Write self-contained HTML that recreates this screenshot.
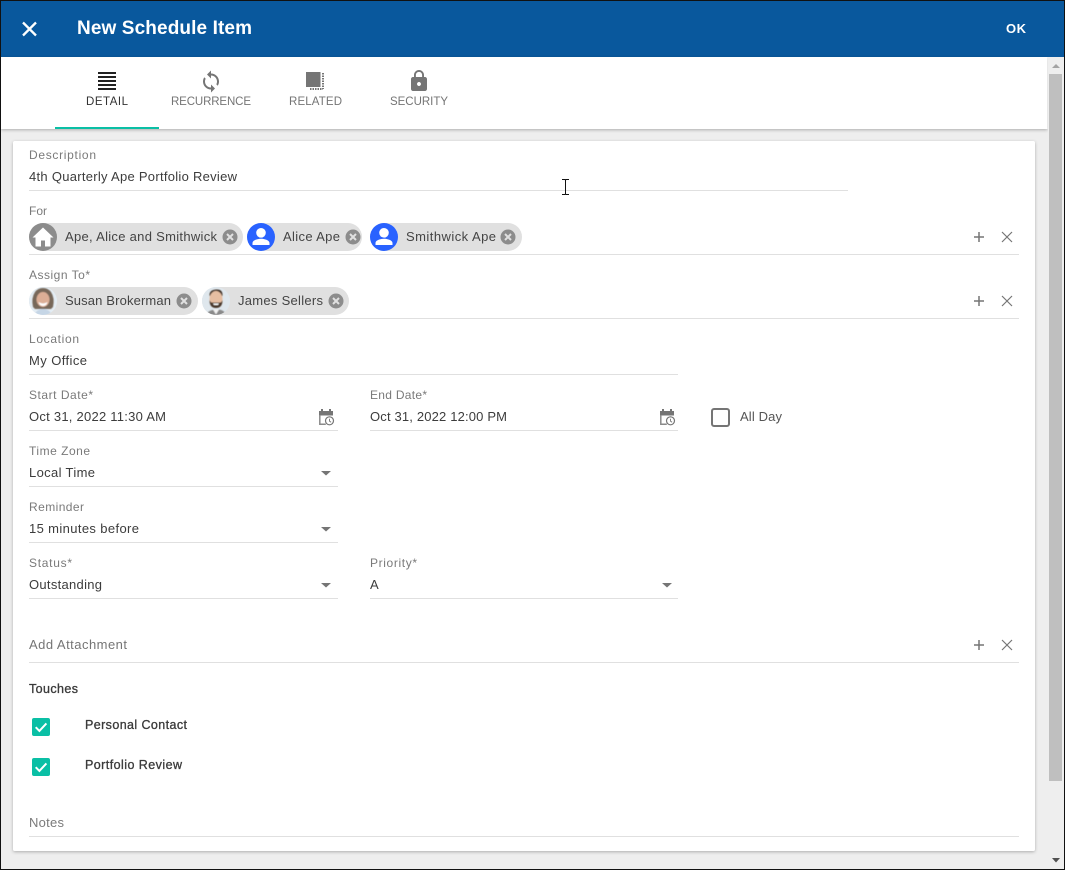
<!DOCTYPE html>
<html><head><meta charset="utf-8"><title>New Schedule Item</title>
<style>
html,body{margin:0;padding:0;width:1065px;height:870px;overflow:hidden;background:#eee}
svg{display:block;font-family:"Liberation Sans",sans-serif}
.l{font-size:12px;fill:#7a7a7a}
.v{font-size:13px;fill:#3c3c3c}
.c{font-size:13px;fill:#444}
.t{font-size:11.500px;fill:#757575}
.ln{stroke:#e0e0e0;stroke-width:1;shape-rendering:crispEdges}
</style></head><body>
<svg width="1065" height="870" viewBox="0 0 1065 870" xmlns="http://www.w3.org/2000/svg">
<defs>
<filter id="sh" x="-5%" y="-5%" width="110%" height="110%"><feDropShadow dx="0" dy="1" stdDeviation="1.500" flood-color="#000" flood-opacity=".28"/></filter>
<filter id="soft" x="-10%" y="-10%" width="120%" height="120%"><feGaussianBlur stdDeviation=".5"/></filter>
<g id="x"><circle r="7.500" fill="#8c8c8c"/><path d="M-3-3L3 3M3-3L-3 3" stroke="#e0e0e0" stroke-width="2"/></g>
<g id="pair"><path d="M979 -5v10M974 0h10" stroke="#757575" stroke-width="1.500"/><path d="M1002-5L1012 5M1012-5L1002 5" stroke="#757575" stroke-width="1.200"/></g>
<path id="caret" d="M-5 0H5L0 4.500Z" fill="#757575"/>
<g id="cal"><path d="M0 2h2V0h2v2h6V0h2v2h2v4.500h-14z" fill="#757575"/><path d="M.8 6v9.200h6" fill="none" stroke="#8a8a8a" stroke-width="1.500"/><circle cx="10.500" cy="11.800" r="4" fill="#fff" stroke="#757575" stroke-width="1.200"/><path d="M10.500 9.800v2.300l1.600 1.100" fill="none" stroke="#757575" stroke-width=".9"/></g>
<g id="person"><circle r="14" fill="#2962ff"/><circle cy="-4.200" r="4.800" fill="#fff"/><path d="M-8.500 8v-2c0-3 5.500-4.300 8.500-4.300S8.500 3 8.500 6v2z" fill="#fff"/></g>
<g id="chk"><rect width="18" height="18" rx="2" fill="#0abfa5"/><path d="M3.700 9.200l3.700 3.700 7-7.500" fill="none" stroke="#fff" stroke-width="2"/></g>
<clipPath id="a1"><circle cx="43" cy="301" r="14"/></clipPath>
<clipPath id="a2"><circle cx="216" cy="301" r="14"/></clipPath>
</defs>

<rect width="1065" height="870" fill="#eee"/>
<rect x="1" y="1" width="1063" height="56" fill="#09589d"/>
<path d="M23 22.500L36 35.500M36 22.500L23 35.500" stroke="#fff" stroke-width="2.300"/>
<text x="77" y="34" font-size="19" font-weight="700" fill="#fff" textLength="175">New Schedule Item</text>
<text x="1006" y="33" font-size="13" font-weight="700" fill="#fff" textLength="20">OK</text>

<rect x="1" y="57" width="1046.500" height="72" fill="#fff" filter="url(#sh)"/>
<rect x="55" y="127" width="104" height="2" fill="#0abfa5"/>
<path d="M98 73h18M98 77h18M98 81h18M98 85h18M98 89h18" stroke="#212121" stroke-width="2"/>
<path transform="translate(199 69.500)" fill="#757575" d="M12 4V1L8 5l4 4V6c3.310 0 6 2.690 6 6 0 1.010-.25 1.970-.7 2.800l1.460 1.460C19.540 15.030 20 13.570 20 12c0-4.420-3.580-8-8-8zm0 14c-3.310 0-6-2.690-6-6 0-1.010.25-1.970.7-2.800L5.240 7.740C4.460 8.970 4 10.430 4 12c0 4.420 3.580 8 8 8v3l4-4-4-4v3z"/>
<rect x="306" y="72" width="14.500" height="15" fill="#757575"/>
<path d="M323 73v16M310 89h13" stroke="#757575" stroke-width="2" stroke-dasharray="1.500 1"/>
<path transform="translate(407 69)" fill="#757575" d="M18 8h-1V6c0-2.760-2.240-5-5-5S7 3.240 7 6v2H6c-1.100 0-2 .9-2 2v10c0 1.100.9 2 2 2h12c1.100 0 2-.9 2-2V10c0-1.100-.9-2-2-2zm-6 9c-1.100 0-2-.9-2-2s.9-2 2-2 2 .9 2 2-.9 2-2 2zm3.100-9H8.900V6c0-1.710 1.390-3.100 3.100-3.100 1.710 0 3.100 1.390 3.100 3.100v2z"/>
<text x="86" y="105" class="t" style="fill:#333" textLength="42">DETAIL</text>
<text x="171" y="105" class="t" textLength="80">RECURRENCE</text>
<text x="289" y="105" class="t" textLength="53">RELATED</text>
<text x="390" y="105" class="t" textLength="58">SECURITY</text>

<rect x="1048" y="57" width="16" height="812" fill="#eee"/>
<rect x="1049" y="74" width="13" height="707" fill="#bfbfbf"/>
<path d="M1052 68h8l-4-4z" fill="#a3a3a3"/>
<path d="M1052 858h8l-4 4.500z" fill="#505050"/>

<rect x="13" y="141" width="1022" height="710" rx="2" fill="#fff" filter="url(#sh)"/>

<text x="29" y="159" class="l" textLength="67">Description</text>
<text x="29" y="181" class="v" textLength="208">4th Quarterly Ape Portfolio Review</text>
<line x1="29" x2="848" y1="190.500" y2="190.500" class="ln"/>

<text x="29" y="215" class="l" textLength="18">For</text>
<rect x="29" y="223" width="214" height="28" rx="14" fill="#e0e0e0"/>
<rect x="247" y="223" width="115" height="28" rx="14" fill="#e0e0e0"/>
<rect x="370" y="223" width="152" height="28" rx="14" fill="#e0e0e0"/>
<circle cx="43" cy="237" r="14" fill="#8c8c8c"/>
<path d="M43 227.500L32.500 237.500h3V246.500h5.500v-6h4v6h5.500V237.500h3z" fill="#fff"/>
<use href="#person" x="261" y="237"/>
<use href="#person" x="384" y="237"/>
<text x="65" y="241" class="c" textLength="152">Ape, Alice and Smithwick</text>
<text x="283" y="241" class="c" textLength="57">Alice Ape</text>
<text x="406" y="241" class="c" textLength="90">Smithwick Ape</text>
<use href="#x" x="230" y="237"/><use href="#x" x="353" y="237"/><use href="#x" x="508" y="237"/>
<use href="#pair" y="237"/>
<line x1="29" x2="1019" y1="254.500" y2="254.500" class="ln"/>

<text x="29" y="279" class="l" textLength="61">Assign To*</text>
<rect x="29" y="287" width="169" height="28" rx="14" fill="#e0e0e0"/>
<rect x="202" y="287" width="147" height="28" rx="14" fill="#e0e0e0"/>
<g clip-path="url(#a1)"><rect x="29" y="287" width="28" height="28" fill="#e4edf4"/>
<g filter="url(#soft)">
<path d="M33 307q-2-9 2-15 3-4 8-4t8 4q4 6 2 15l-2 2H35z" fill="#77685a"/>
<ellipse cx="43" cy="299.500" rx="6.500" ry="7.500" fill="#dcae96"/>
<path d="M38.500 302q4.500 3 9 0-1 4-4.500 4t-4.500-4z" fill="#fff"/>
<path d="M34 316q2-7 9-7t9 7z" fill="#c6d6e6"/></g></g>
<g clip-path="url(#a2)"><rect x="202" y="287" width="28" height="28" fill="#dfe7ed"/>
<g filter="url(#soft)">
<path d="M209.500 296q-.5-6 6.500-6.500t6.500 6.500z" fill="#3f3026"/>
<ellipse cx="216" cy="299" rx="6.500" ry="8" fill="#e6bea2"/>
<path d="M209.500 300q0 8 6.500 8t6.500-8q-1 2.500-2.500 2.500h-8q-1.500 0-2.500-2.500z" fill="#4a382c"/>
<path d="M213 303.500h6l-1 1.500h-4z" fill="#fff"/>
<path d="M206 316q1-6 10-6.500t10 6.500z" fill="#8a8a8a"/><path d="M213 309.500l3 5 3-5z" fill="#f2f2f2"/></g></g>
<text x="65" y="305" class="c" textLength="106">Susan Brokerman</text>
<text x="238" y="305" class="c" textLength="85">James Sellers</text>
<use href="#x" x="184" y="301"/><use href="#x" x="336" y="301"/>
<use href="#pair" y="301"/>
<line x1="29" x2="1019" y1="318.500" y2="318.500" class="ln"/>

<text x="29" y="343" class="l" textLength="50">Location</text>
<text x="29" y="365" class="v" textLength="58">My Office</text>
<line x1="29" x2="678" y1="374.500" y2="374.500" class="ln"/>

<text x="29" y="399" class="l" textLength="64">Start Date*</text>
<text x="29" y="421" class="v" textLength="137">Oct 31, 2022 11:30 AM</text>
<use href="#cal" x="319" y="409"/>
<line x1="29" x2="338" y1="430.500" y2="430.500" class="ln"/>
<text x="370" y="399" class="l" textLength="57">End Date*</text>
<text x="370" y="421" class="v" textLength="137">Oct 31, 2022 12:00 PM</text>
<use href="#cal" x="660" y="409"/>
<line x1="370" x2="678" y1="430.500" y2="430.500" class="ln"/>
<rect x="712" y="409" width="17" height="17" rx="2" fill="none" stroke="#757575" stroke-width="2"/>
<text x="740" y="421" class="v" style="fill:#555" textLength="42">All Day</text>

<text x="29" y="455" class="l" textLength="61">Time Zone</text>
<text x="29" y="477" class="v" textLength="66">Local Time</text>
<use href="#caret" x="326" y="471"/>
<line x1="29" x2="338" y1="486.500" y2="486.500" class="ln"/>

<text x="29" y="511" class="l" textLength="55">Reminder</text>
<text x="29" y="533" class="v" textLength="110">15 minutes before</text>
<use href="#caret" x="326" y="527"/>
<line x1="29" x2="338" y1="542.500" y2="542.500" class="ln"/>

<text x="29" y="567" class="l" textLength="43">Status*</text>
<text x="29" y="589" class="v" textLength="73">Outstanding</text>
<use href="#caret" x="326" y="583"/>
<line x1="29" x2="338" y1="598.500" y2="598.500" class="ln"/>
<text x="370" y="567" class="l" textLength="47">Priority*</text>
<text x="370" y="589" class="v" textLength="9">A</text>
<use href="#caret" x="667" y="583"/>
<line x1="370" x2="678" y1="598.500" y2="598.500" class="ln"/>

<text x="29" y="649" class="v" style="fill:#757575" textLength="98">Add Attachment</text>
<use href="#pair" y="645"/>
<line x1="29" x2="1019" y1="662.500" y2="662.500" class="ln"/>

<text x="29" y="693" font-size="12.500" fill="#3a3a3a" stroke="#3a3a3a" stroke-width=".3" textLength="49">Touches</text>
<use href="#chk" x="32" y="718"/>
<text x="85" y="729" font-size="12.500" fill="#3a3a3a" stroke="#3a3a3a" stroke-width=".3" textLength="102">Personal Contact</text>
<use href="#chk" x="32" y="758"/>
<text x="85" y="769" font-size="12.500" fill="#3a3a3a" stroke="#3a3a3a" stroke-width=".3" textLength="97">Portfolio Review</text>

<text x="29" y="827" class="l" style="font-size:13px" textLength="35">Notes</text>
<line x1="29" x2="1019" y1="836.500" y2="836.500" class="ln"/>

<path d="M562 179.500h3l.5 .6.5-.6h3M565.500 180v14M562 194.500h3l.5-.6.5 .6h3" fill="none" stroke="#111" stroke-width="1"/>

<rect x=".5" y=".5" width="1064" height="869" fill="none" stroke="#111" stroke-width="1"/>
</svg>
</body></html>
